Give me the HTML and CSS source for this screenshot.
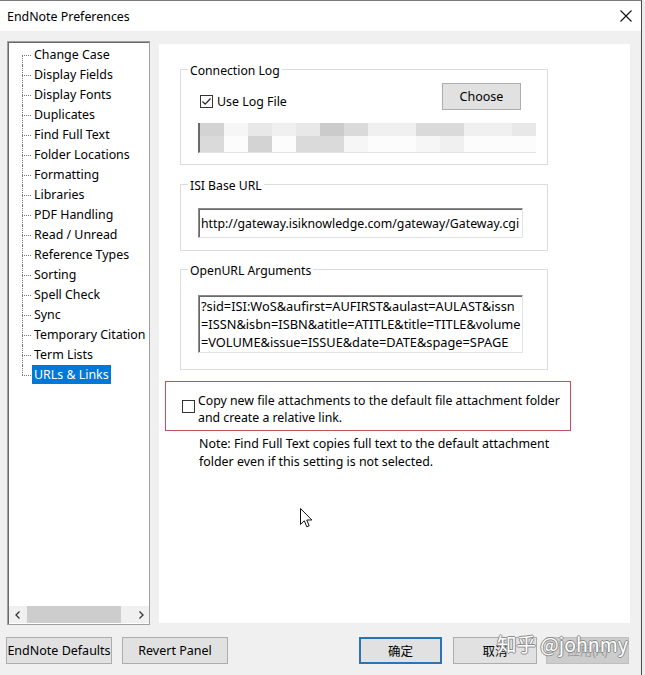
FILE: index.html
```html
<!DOCTYPE html>
<html>
<head>
<meta charset="utf-8">
<link rel="stylesheet" href="styles.css">
</head>
<body>
<div class="window">
  <div class="titlebar">
    <span class="title">EndNote Preferences</span>
    <svg class="close" width="12" height="12" viewBox="0 0 12 12"><path d="M0.5 0.5 L11.5 11.5 M11.5 0.5 L0.5 11.5" stroke="#111" stroke-width="1.1" fill="none"/></svg>
  </div>
  <div class="main">
    <div class="tree">
      <ul class="tree-list">
        <li><span>Change Case</span></li>
        <li><span>Display Fields</span></li>
        <li><span>Display Fonts</span></li>
        <li><span>Duplicates</span></li>
        <li><span>Find Full Text</span></li>
        <li><span>Folder Locations</span></li>
        <li><span>Formatting</span></li>
        <li><span>Libraries</span></li>
        <li><span>PDF Handling</span></li>
        <li><span>Read / Unread</span></li>
        <li><span>Reference Types</span></li>
        <li><span>Sorting</span></li>
        <li><span>Spell Check</span></li>
        <li><span>Sync</span></li>
        <li><span>Temporary Citation</span></li>
        <li><span>Term Lists</span></li>
        <li><span class="selected">URLs &amp; Links</span></li>
      </ul>
      <div class="hscroll">
        <div class="arrow"><svg width="6" height="8" viewBox="0 0 6 8"><path d="M4.5 0.5 L1 4 L4.5 7.5" stroke="#333" stroke-width="1.3" fill="none"/></svg></div>
        <div class="thumb"></div>
        <div class="arrow right"><svg width="6" height="8" viewBox="0 0 6 8"><path d="M1.5 0.5 L5 4 L1.5 7.5" stroke="#333" stroke-width="1.3" fill="none"/></svg></div>
      </div>
    </div>
    <div class="panel">
      <fieldset class="group g1">
        <legend>Connection Log</legend>
        <div class="log-row">
          <label class="check">
            <svg class="box" width="13" height="13" viewBox="0 0 13 13"><rect x="0.5" y="0.5" width="12" height="12" fill="#fff" stroke="#333"/><path d="M2.5 6.5 L5.2 9.2 L10.5 3.5" stroke="#222" stroke-width="1.2" fill="none"/></svg>
            <span>Use Log File</span>
          </label>
          <button class="btn choose">Choose</button>
        </div>
        <div class="blur">
          <i class="c3"></i><i class="c7"></i><i class="c5"></i><i class="c6"></i><i class="c5"></i><i class="c2"></i><i class="c4"></i><i class="c6"></i><i class="c6"></i><i class="c4"></i><i class="c4"></i><i class="c6"></i><i class="c6"></i><i class="c5"></i>
          <i class="c4"></i><i class="c8"></i><i class="c3"></i><i class="c8"></i><i class="c4"></i><i class="c4"></i><i class="c7"></i><i class="c8"></i><i class="c8"></i><i class="c7"></i><i class="c6"></i><i class="c8"></i><i class="c8"></i><i class="c8"></i>
        </div>
      </fieldset>
      <fieldset class="group g2">
        <legend>ISI Base URL</legend>
        <div class="field url">http://gateway.isiknowledge.com/gateway/Gateway.cgi</div>
      </fieldset>
      <fieldset class="group g3">
        <legend>OpenURL Arguments</legend>
        <div class="field args">
          <span>?sid=ISI:WoS&amp;aufirst=AUFIRST&amp;aulast=AULAST&amp;issn</span>
          <span>=ISSN&amp;isbn=ISBN&amp;atitle=ATITLE&amp;title=TITLE&amp;volume</span>
          <span>=VOLUME&amp;issue=ISSUE&amp;date=DATE&amp;spage=SPAGE</span>
        </div>
      </fieldset>
      <div class="attach">
        <svg class="box" width="13" height="13" viewBox="0 0 13 13"><rect x="0.5" y="0.5" width="12" height="12" fill="#fff" stroke="#333"/></svg>
        <p class="attach-text">Copy new file attachments to the default file attachment folder and create a relative link.</p>
      </div>
      <p class="note">Note: Find Full Text copies full text to the default attachment folder even if this setting is not selected.</p>
    </div>
  </div>
  <div class="footer">
    <button class="btn wide">EndNote Defaults</button>
    <button class="btn wide revert">Revert Panel</button>
    <button class="btn ok">确定</button>
    <button class="btn cancel">取消</button>
    <button class="btn apply">应用(A)</button>
  </div>
  <div class="watermark">知乎 @johnmy</div>
  <svg class="cursor" width="13" height="21" viewBox="0 0 13 21"><path d="M0.5 0.5 L0.5 16.5 L4.3 12.8 L6.8 18.8 L9.2 17.8 L6.8 12 L11.8 12 Z" fill="#fff" stroke="#111" stroke-width="1" stroke-linejoin="round"/></svg>
</div>
</body>
</html>
```
FILE: styles.css
```css
html, body {
  margin: 0;
  padding: 0;
}
body {
  width: 645px;
  height: 675px;
  overflow: hidden;
  background: #ececec;
  font-family: "Noto Sans", "Noto Sans CJK SC", sans-serif;
  font-size: 12.4px;
  color: #000;
}
.window {
  position: relative;
  width: 642px;
  height: 675px;
  box-sizing: border-box;
  border-top: 1px solid #7a7a7a;
  border-right: 1px solid #4a4a4a;
  background: #f0f0f0;
}
.titlebar {
  height: 30px;
  background: #fff;
  display: flex;
  align-items: center;
  justify-content: space-between;
  padding: 0 9px 0 7px;
}
.title {
  font-size: 12.4px;
  padding-top: 1px;
}
.main {
  display: flex;
  align-items: flex-start;
  padding: 10px 0 0 7px;
}
.tree {
  width: 143px;
  height: 584px;
  box-sizing: border-box;
  border: 1px solid #a0a0a0;
  box-shadow: inset 1px 1px 0 #6a6a6a;
  background: #fff;
  display: flex;
  flex-direction: column;
}
.tree-list {
  list-style: none;
  margin: 0;
  padding: 3px 0 0 0;
}
.tree-list li {
  position: relative;
  height: 20px;
  line-height: 20px;
  padding-left: 24px;
  white-space: nowrap;
  font-size: 12.4px;
}
.tree-list li::before {
  content: "";
  position: absolute;
  left: 14px;
  top: 10px;
  width: 9px;
  border-top: 1px dotted #777;
}
.tree-list li::after {
  content: "";
  position: absolute;
  left: 14px;
  top: 0;
  height: 20px;
  border-left: 1px dotted #777;
}
.tree-list li:first-child::after {
  top: 10px;
  height: 10px;
}
.tree-list li:last-child::after {
  height: 10px;
}
.tree-list li span {
  padding: 0 2px;
  display: inline-block;
  line-height: 19px;
}
.tree-list li span.selected {
  background: #0078d7;
  color: #fff;
}
.hscroll {
  margin: auto 0 1px 1px;
  height: 17px;
  background: #f0f0f0;
  display: flex;
  align-items: center;
}
.arrow {
  width: 17px;
  height: 17px;
  display: flex;
  align-items: center;
  justify-content: center;
}
.thumb {
  margin-left: 1px;
  width: 94px;
  height: 17px;
  background: #cdcdcd;
}
.arrow.right {
  margin-left: auto;
}
.panel {
  margin: 3px 0 0 9px;
  width: 471px;
  height: 579px;
  box-sizing: border-box;
  background: #fff;
  padding: 15px 0 0 6px;
}
.group {
  margin: 0 0 0 15px;
  width: 368px;
  min-width: 0;
  box-sizing: border-box;
  border: 1px solid #dcdcdc;
  padding: 0 0 12px 0;
}
.group legend {
  margin-left: 7px;
  padding: 4px 2px 0 2px;
  line-height: 16px;
  font-size: 12.2px;
}
.g1 {
  padding-bottom: 11px;
}
.g2 {
  margin-top: 9px;
}
.g3 {
  margin-top: 8px;
  padding-bottom: 16px;
}
.log-row {
  display: flex;
  justify-content: space-between;
  align-items: flex-start;
  margin-top: 4px;
  padding: 0 26px 0 19px;
}
.check {
  display: flex;
  align-items: center;
  gap: 4px;
  margin-top: 10px;
  line-height: 17px;
  font-size: 12.4px;
}
.box {
  display: block;
  flex: none;
}
.btn {
  font-family: "Noto Sans", "Noto Sans CJK SC", sans-serif;
  font-size: 12.5px;
  color: #000;
  height: 27px;
  background: #e1e1e1;
  border: 1px solid #adadad;
  padding: 0;
  box-sizing: border-box;
}
.choose {
  width: 79px;
}
.blur {
  margin: 13px 0 0 17px;
  display: grid;
  grid-template-columns: repeat(14, 24px);
  grid-template-rows: 13px 16px;
  width: 336px;
  border-left: 2px solid #6a6a6a;
  border-bottom: 1px solid #e3e3e3;
}
.blur i { display: block; }
.c2 { background: #cbcbcb; }
.c3 { background: #d3d3d3; }
.c4 { background: #dadada; }
.c5 { background: #e8e8e8; }
.c6 { background: #f0f0f0; }
.c7 { background: #f6f6f6; }
.c8 { background: #fcfcfc; }
.field {
  margin-left: 17px;
  width: 325px;
  box-sizing: border-box;
  border-top: 1px solid #8a8a8a;
  border-left: 1px solid #8a8a8a;
  border-right: 1px solid #e3e3e3;
  border-bottom: 1px solid #e3e3e3;
  box-shadow: inset 1px 1px 0 #6a6a6a;
  padding-left: 2px;
  white-space: nowrap;
  overflow: hidden;
}
.url {
  margin-top: 14px;
  height: 30px;
  line-height: 29px;
  font-size: 12.3px;
}
.args {
  margin-top: 16px;
  height: 58px;
  line-height: 18px;
  padding-top: 1px;
  font-size: 12.8px;
}
.args span {
  display: block;
}
.attach {
  margin-top: 11px;
  width: 406px;
  height: 50px;
  box-sizing: border-box;
  border: 1px solid #c0505a;
  display: flex;
  align-items: flex-start;
  padding: 10px 0 0 16px;
}
.attach .box {
  margin-top: 8px;
}
.attach-text {
  margin: 0 0 0 3px;
  width: 370px;
  line-height: 17px;
  font-size: 12.3px;
}
.note {
  margin: 4px 0 0 34px;
  width: 365px;
  line-height: 18px;
  font-size: 12.4px;
}
.footer {
  display: flex;
  padding: 12px 0 0 6px;
}
.wide {
  width: 106px;
}
.revert {
  margin-left: 10px;
}
.ok {
  margin-left: 131px;
  width: 83px;
  border: 2px solid #2874b4;
}
.cancel {
  margin-left: 11px;
  width: 84px;
}
.apply {
  margin-left: 9px;
  width: 83px;
  background: #cccccc;
  border-color: #bfbfbf;
  color: #9d9d9d;
}
.watermark {
  position: absolute;
  left: 497px;
  top: 628px;
  font-family: "Noto Sans CJK SC", "Noto Sans", sans-serif;
  font-size: 19.5px;
  color: #fff;
  white-space: nowrap;
  text-shadow: 1px 0 0 #8a8a8a, -1px 0 0 #8a8a8a, 0 1px 0 #8a8a8a, 0 -1px 0 #8a8a8a;
}
.cursor {
  position: absolute;
  left: 300px;
  top: 507px;
}
```
